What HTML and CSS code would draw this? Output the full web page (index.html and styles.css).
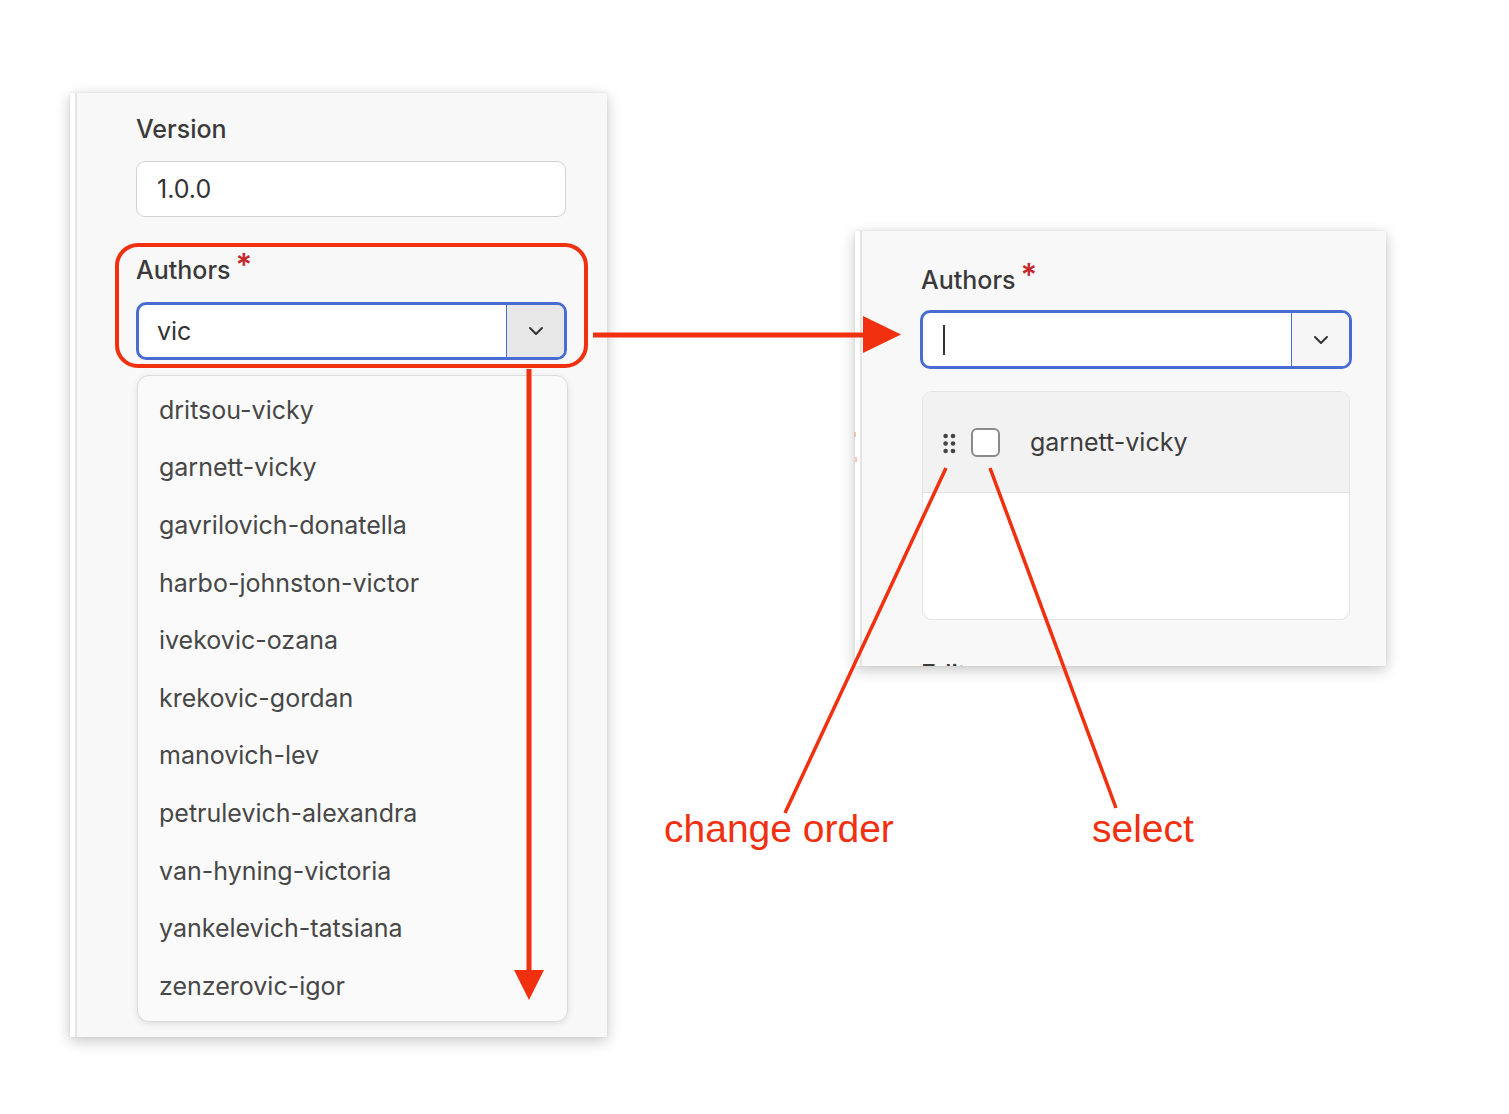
FILE: index.html
```html
<!DOCTYPE html>
<html lang="en">
<head>
<meta charset="utf-8">
<title>Authors field</title>
<link rel="stylesheet" href="styles.css">
</head>
<body>
<div class="canvas">
  <section class="shot shot-left">
    <div class="frame">
      <div class="label">Version</div>
      <div class="input">1.0.0</div>
      <div class="label label-authors">Authors<span class="req">*</span></div>
      <div class="select">
        <div class="select-value">vic</div>
        <div class="select-btn dark">
          <svg width="16" height="10" viewBox="0 0 16 10"><path d="M2 2 L8 8 L14 2" fill="none" stroke="#333" stroke-width="2" stroke-linecap="round" stroke-linejoin="round"/></svg>
        </div>
      </div>
      <ul class="menu">
        <li>dritsou-vicky</li>
        <li>garnett-vicky</li>
        <li>gavrilovich-donatella</li>
        <li>harbo-johnston-victor</li>
        <li>ivekovic-ozana</li>
        <li>krekovic-gordan</li>
        <li>manovich-lev</li>
        <li>petrulevich-alexandra</li>
        <li>van-hyning-victoria</li>
        <li>yankelevich-tatsiana</li>
        <li>zenzerovic-igor</li>
      </ul>
    </div>
  </section>

  <section class="shot shot-right">
    <div class="frame frame-right">
      <div class="label">Authors<span class="req">*</span></div>
      <div class="select select-right">
        <div class="select-value"><span class="caret"></span></div>
        <div class="select-btn light">
          <svg width="16" height="10" viewBox="0 0 16 10"><path d="M2 2 L8 8 L14 2" fill="none" stroke="#333" stroke-width="2" stroke-linecap="round" stroke-linejoin="round"/></svg>
        </div>
      </div>
      <div class="chosen">
        <div class="chosen-row">
          <svg class="grip" width="13" height="21" viewBox="0 0 13 21"><circle cx="2.6" cy="3" r="2.3" fill="#444"/><circle cx="10" cy="3" r="2.3" fill="#444"/><circle cx="2.6" cy="10.5" r="2.3" fill="#444"/><circle cx="10" cy="10.5" r="2.3" fill="#444"/><circle cx="2.6" cy="18" r="2.3" fill="#444"/><circle cx="10" cy="18" r="2.3" fill="#444"/></svg>
          <span class="check"></span>
          <span class="chosen-name">garnett-vicky</span>
        </div>
        <div class="chosen-empty"></div>
      </div>
      <div class="label label-edit">Editors</div>
    </div>
  </section>

  <svg class="annot" width="1509" height="1114" viewBox="0 0 1509 1114">
    <rect x="117" y="245" width="469" height="121" rx="21" ry="21" fill="none" stroke="#f0300e" stroke-width="4"/>
    <line x1="593" y1="335" x2="866" y2="335" stroke="#f0300e" stroke-width="5"/>
    <polygon points="863,316 901,334.5 863,353" fill="#f0300e"/>
    <line x1="529" y1="369" x2="529" y2="975" stroke="#f0300e" stroke-width="5"/>
    <polygon points="514,970 544,970 529,1000" fill="#f0300e"/>
    <line x1="946" y1="468" x2="785" y2="813" stroke="#f0300e" stroke-width="3.5"/>
    <line x1="990" y1="468" x2="1116" y2="808" stroke="#f0300e" stroke-width="3.5"/>
    <line x1="855" y1="432" x2="855" y2="437" stroke="#f5a08f" stroke-width="1.2"/>
    <line x1="856" y1="457" x2="856" y2="462" stroke="#f5a08f" stroke-width="1.2"/>
  </svg>

  <span class="note note-order">change order</span>
  <span class="note note-select">select</span>
</div>
</body>
</html>
```

FILE: styles.css
```css
html, body {
  margin: 0;
  padding: 0;
  background: #ffffff;
}

.canvas {
  position: relative;
  width: 1509px;
  height: 1114px;
  overflow: hidden;
  font-family: Inter, "Noto Sans", "Liberation Sans", sans-serif;
}

.shot {
  position: absolute;
  display: flex;
  box-sizing: border-box;
  border-left: 5px solid #ffffff;
  background: #ffffff;
  box-shadow: 0 4px 14px rgba(0, 0, 0, 0.22), 0 0 3px rgba(0, 0, 0, 0.08);
  overflow: hidden;
}

.shot-left {
  left: 70px;
  top: 93px;
  width: 537px;
  height: 944px;
}

.shot-right {
  left: 855px;
  top: 231px;
  width: 531px;
  height: 435px;
}

.frame {
  flex: 1;
  display: flex;
  flex-direction: column;
  align-items: flex-start;
  border-left: 2px solid #e4e4e4;
  background: #f8f8f8;
  padding: 21px 40px 0 59px;
}

.frame > * {
  flex-shrink: 0;
}

.frame-right {
  padding-top: 34px;
}

.label {
  height: 30px;
  font-size: 25px;
  line-height: 30px;
  font-weight: 500;
  color: #3a3a3a;
}

.label-authors {
  margin-top: 38px;
}

.req {
  color: #c5282c;
  font-size: 31px;
  line-height: 0;
  font-weight: 600;
  margin-left: 5px;
  position: relative;
  top: -3px;
}

.input {
  box-sizing: border-box;
  margin-top: 17px;
  width: 430px;
  height: 56px;
  border: 1px solid #d2d2d2;
  border-radius: 9px;
  background: #ffffff;
  padding-left: 20px;
  font-size: 25px;
  line-height: 54px;
  color: #333333;
}

.select {
  box-sizing: border-box;
  margin-top: 17px;
  width: 431px;
  height: 58px;
  border: 3px solid #4a6bd1;
  border-radius: 10px;
  background: #ffffff;
  display: flex;
  overflow: hidden;
}

.select-right {
  margin-top: 15px;
  margin-left: -1px;
  width: 432px;
  height: 59px;
}

.select-value {
  flex: 1;
  display: flex;
  align-items: center;
  padding-left: 18px;
  font-size: 25px;
  color: #333333;
}

.select-right .select-value {
  padding-left: 20px;
}

.caret {
  display: block;
  width: 2px;
  height: 30px;
  background: #333333;
}

.select-btn {
  width: 57px;
  display: flex;
  align-items: center;
  justify-content: center;
  border-left: 1px solid #4a6bd1;
}

.select-btn.dark {
  background: #e7e7e7;
}

.select-btn.light {
  background: #f6f6f6;
}

.menu {
  box-sizing: border-box;
  list-style: none;
  margin: 15px 0 0 1px;
  padding: 5px 0 0;
  width: 431px;
  height: 647px;
  border: 1px solid #dcdcdc;
  border-radius: 12px;
  background: #fafafa;
  box-shadow: 0 2px 6px rgba(0, 0, 0, 0.10);
}

.menu li {
  height: 57.6px;
  display: flex;
  align-items: center;
  padding-left: 21px;
  font-size: 25px;
  color: #474747;
}

.chosen {
  box-sizing: border-box;
  margin: 22px 0 0 1px;
  width: 428px;
  border: 1px solid #e3e3e3;
  border-radius: 10px;
  background: #ffffff;
  overflow: hidden;
}

.chosen-row {
  box-sizing: border-box;
  height: 101px;
  display: flex;
  align-items: center;
  padding-left: 20px;
  background: #f2f2f2;
  border-bottom: 1px solid #e2e2e2;
}

.grip {
  display: block;
  margin-top: 2px;
}

.check {
  box-sizing: border-box;
  display: block;
  width: 29px;
  height: 29px;
  margin-left: 15px;
  border: 2.5px solid #8a8a8a;
  border-radius: 6px;
  background: #ffffff;
}

.chosen-name {
  margin-left: 30px;
  font-size: 25px;
  color: #3c3c3c;
}

.chosen-empty {
  height: 126px;
}

.label-edit {
  margin-top: 39px;
}

.annot {
  position: absolute;
  left: 0;
  top: 0;
  pointer-events: none;
}

.note {
  position: absolute;
  top: 809px;
  font-family: "Liberation Sans", Arial, sans-serif;
  font-size: 39px;
  line-height: 39px;
  color: #f0300e;
  white-space: nowrap;
}

.note-order {
  left: 664px;
}

.note-select {
  left: 1092px;
}
```
